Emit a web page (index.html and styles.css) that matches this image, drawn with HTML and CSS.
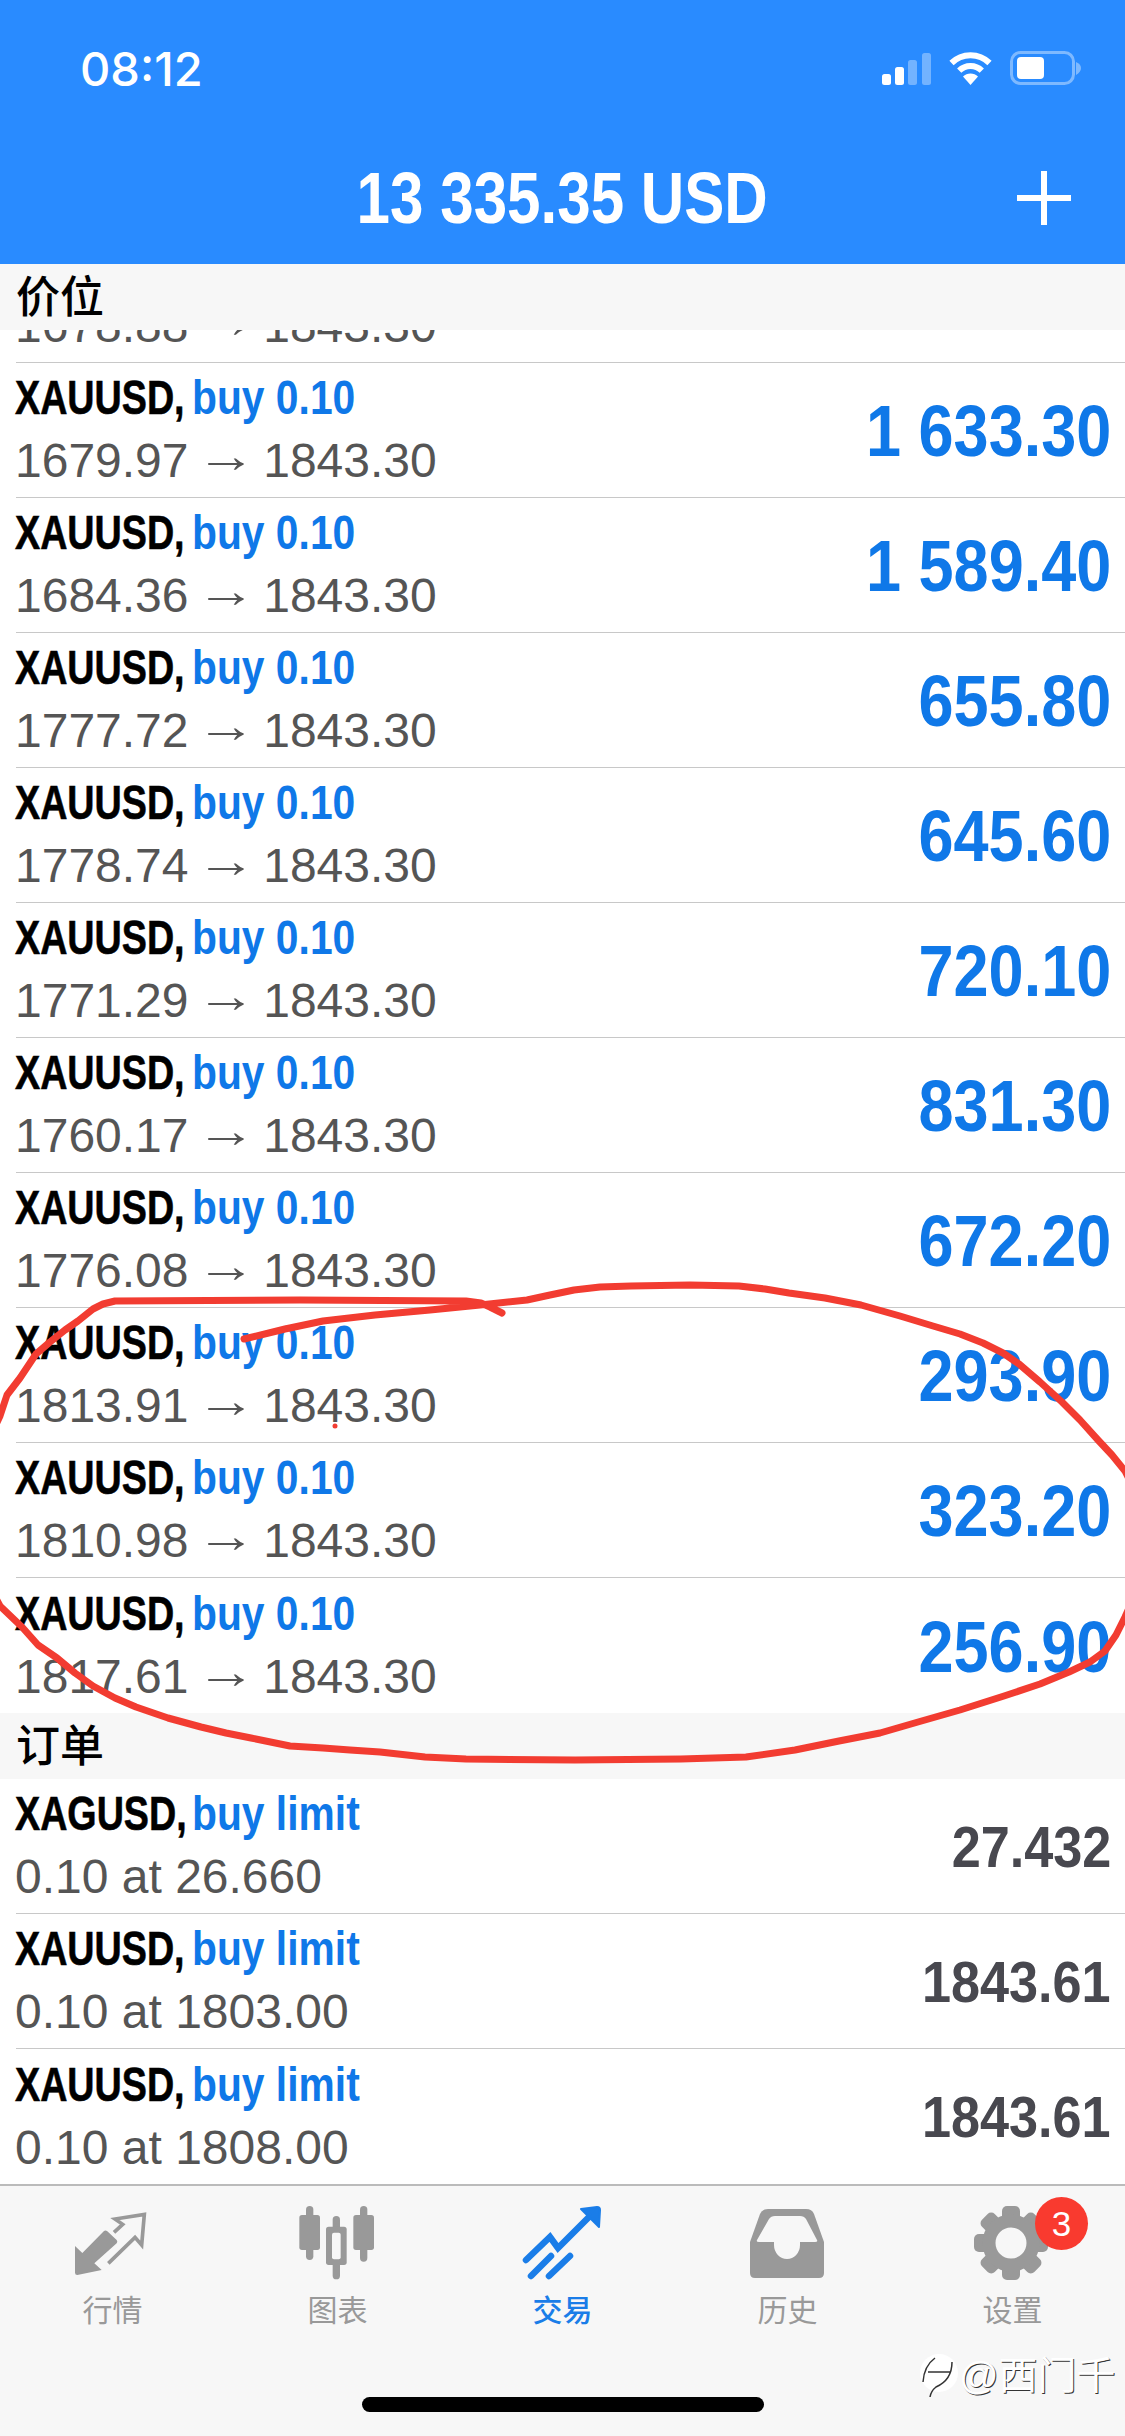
FILE: index.html
```html
<!DOCTYPE html>
<html lang="zh">
<head>
    <meta charset="UTF-8">
    <meta name="viewport" content="width=device-width, initial-scale=1.0">
    <title>交易</title>
    <link rel="stylesheet" href="styles.css">
</head>
<body>
    <div class="page">
        <!-- Cabecera azul -->
        <header class="header">
            <div class="status">
                <span class="time">08:12</span>
                <div class="status-icons">
                    <svg width="49" height="32" viewBox="0 0 49 32">
                        <rect x="0" y="21" width="9" height="11" rx="2.5" fill="#fff"/>
                        <rect x="13" y="14" width="9" height="18" rx="2.5" fill="#fff"/>
                        <rect x="26" y="7" width="9" height="25" rx="2.5" fill="#fff" opacity=".35"/>
                        <rect x="40" y="0" width="9" height="32" rx="2.5" fill="#fff" opacity=".35"/>
                    </svg>
                    <svg width="47" height="34" viewBox="0 0 47 34">
                        <path d="M4.5 12 A27 27 0 0 1 42.5 12" fill="none" stroke="#fff" stroke-width="6"/>
                        <path d="M12.2 19.7 A16 16 0 0 1 34.8 19.7" fill="none" stroke="#fff" stroke-width="6"/>
                        <path d="M23.5 34 L16 25.5 A10.6 10.6 0 0 1 31 25.5 Z" fill="#fff"/>
                    </svg>
                    <svg width="72" height="34" viewBox="0 0 72 34">
                        <rect x="1.5" y="1.5" width="62" height="31" rx="9" fill="none" stroke="#fff" stroke-opacity=".4" stroke-width="3"/>
                        <rect x="7" y="6" width="27" height="22" rx="4" fill="#fff"/>
                        <path d="M66 11 Q71 13 71 17 Q71 21 66 24 Z" fill="#fff" opacity=".4"/>
                    </svg>
                </div>
            </div>
            <div class="bar">
                <span></span>
                <h1 class="balance">13 335.35 USD</h1>
                <svg class="plus" width="54" height="54" viewBox="0 0 54 54">
                    <path d="M27 0 V54 M0 27 H54" stroke="#fff" stroke-width="6"/>
                </svg>
            </div>
        </header>

        <!-- Posiciones -->
        <div class="section-title">价位</div>
        <div class="positions">
            <div class="row">
                <div class="row-text">
                    <div class="line"></div>
                    <div class="sub">1678.88 <span class="arrow">→</span> 1843.30</div>
                </div>
            </div>
            <div class="row">
                <div class="row-text">
                    <div class="line"><span class="symbol">XAUUSD,</span><span class="side">buy 0.10</span></div>
                    <div class="sub">1679.97 <span class="arrow">→</span> 1843.30</div>
                </div>
                <div class="profit">1 633.30</div>
            </div>
            <div class="row">
                <div class="row-text">
                    <div class="line"><span class="symbol">XAUUSD,</span><span class="side">buy 0.10</span></div>
                    <div class="sub">1684.36 <span class="arrow">→</span> 1843.30</div>
                </div>
                <div class="profit">1 589.40</div>
            </div>
            <div class="row">
                <div class="row-text">
                    <div class="line"><span class="symbol">XAUUSD,</span><span class="side">buy 0.10</span></div>
                    <div class="sub">1777.72 <span class="arrow">→</span> 1843.30</div>
                </div>
                <div class="profit">655.80</div>
            </div>
            <div class="row">
                <div class="row-text">
                    <div class="line"><span class="symbol">XAUUSD,</span><span class="side">buy 0.10</span></div>
                    <div class="sub">1778.74 <span class="arrow">→</span> 1843.30</div>
                </div>
                <div class="profit">645.60</div>
            </div>
            <div class="row">
                <div class="row-text">
                    <div class="line"><span class="symbol">XAUUSD,</span><span class="side">buy 0.10</span></div>
                    <div class="sub">1771.29 <span class="arrow">→</span> 1843.30</div>
                </div>
                <div class="profit">720.10</div>
            </div>
            <div class="row">
                <div class="row-text">
                    <div class="line"><span class="symbol">XAUUSD,</span><span class="side">buy 0.10</span></div>
                    <div class="sub">1760.17 <span class="arrow">→</span> 1843.30</div>
                </div>
                <div class="profit">831.30</div>
            </div>
            <div class="row">
                <div class="row-text">
                    <div class="line"><span class="symbol">XAUUSD,</span><span class="side">buy 0.10</span></div>
                    <div class="sub">1776.08 <span class="arrow">→</span> 1843.30</div>
                </div>
                <div class="profit">672.20</div>
            </div>
            <div class="row">
                <div class="row-text">
                    <div class="line"><span class="symbol">XAUUSD,</span><span class="side">buy 0.10</span></div>
                    <div class="sub">1813.91 <span class="arrow">→</span> 1843.30</div>
                </div>
                <div class="profit">293.90</div>
            </div>
            <div class="row">
                <div class="row-text">
                    <div class="line"><span class="symbol">XAUUSD,</span><span class="side">buy 0.10</span></div>
                    <div class="sub">1810.98 <span class="arrow">→</span> 1843.30</div>
                </div>
                <div class="profit">323.20</div>
            </div>
            <div class="row last">
                <div class="row-text">
                    <div class="line"><span class="symbol">XAUUSD,</span><span class="side">buy 0.10</span></div>
                    <div class="sub">1817.61 <span class="arrow">→</span> 1843.30</div>
                </div>
                <div class="profit">256.90</div>
            </div>
        </div>

        <!-- Órdenes -->
        <div class="section-title">订单</div>
        <div class="orders">
            <div class="row">
                <div class="row-text">
                    <div class="line"><span class="symbol">XAGUSD,</span><span class="side">buy limit</span></div>
                    <div class="sub">0.10 at 26.660</div>
                </div>
                <div class="price">27.432</div>
            </div>
            <div class="row">
                <div class="row-text">
                    <div class="line"><span class="symbol">XAUUSD,</span><span class="side">buy limit</span></div>
                    <div class="sub">0.10 at 1803.00</div>
                </div>
                <div class="price">1843.61</div>
            </div>
            <div class="row last">
                <div class="row-text">
                    <div class="line"><span class="symbol">XAUUSD,</span><span class="side">buy limit</span></div>
                    <div class="sub">0.10 at 1808.00</div>
                </div>
                <div class="price">1843.61</div>
            </div>
        </div>

        <!-- Barra de pestañas -->
        <nav class="tabs">
            <div class="tab">
                <svg class="tab-icon" viewBox="210 60 255 255">
                    <path d="M225 198 L247 219 L312 153 Q317 150 322 154 L350 180 Q354 185 350 190 L283 250 L305 270 L232 285 Q225 285 225 278 Z" fill="#999"/>
                    <path d="M342 157 L368 133 L345 117 L433 103 L425 195 L405 172 L325 250" fill="none" stroke="#999" stroke-width="11"/>
                </svg>
                <span>行情</span>
            </div>
            <div class="tab">
                <svg class="tab-icon" viewBox="885 60 255 255">
                    <rect x="918" y="78" width="22" height="162" rx="11" fill="#999"/>
                    <rect x="898" y="105" width="62" height="105" rx="8" fill="#999"/>
                    <rect x="1080" y="78" width="22" height="167" rx="11" fill="#999"/>
                    <rect x="1060" y="105" width="62" height="105" rx="8" fill="#999"/>
                    <rect x="998" y="108" width="22" height="190" rx="11" fill="#999"/>
                    <rect x="978" y="140" width="62" height="115" rx="8" fill="#999"/>
                    <rect x="996" y="158" width="26" height="80" rx="6" fill="#f7f7f7"/>
                </svg>
                <span>图表</span>
            </div>
            <div class="tab active">
                <svg class="tab-icon" viewBox="0 0 85 85">
                    <path d="M6 60 L30 37 L38 48 L73 13" fill="none" stroke="#1a7de8" stroke-width="6.5" stroke-linecap="round"/>
                    <path d="M61 9 L77 7 Q80 7 80 10 L79 27 Z" fill="#1a7de8" stroke="#1a7de8" stroke-width="2" stroke-linejoin="round"/>
                    <path d="M11 76 L31 56 M29 76 L50 56" fill="none" stroke="#1a7de8" stroke-width="6.5" stroke-linecap="round"/>
                </svg>
                <span>交易</span>
            </div>
            <div class="tab">
                <svg class="tab-icon" viewBox="-5 -9 85 85">
                    <path d="M18 0 H56 Q62 0 64 5 L74 33 V64 Q74 69 69 69 H5 Q0 69 0 64 V33 L10 5 Q12 0 18 0 Z" fill="#999"/>
                    <path d="M25 7 H50 Q54 7 56 10 L67 31 Q68 33 65 33 H50 V36 A13 14 0 0 1 24 36 V33 H9 Q6 33 7 31 L19 10 Q21 7 25 7 Z" fill="#f7f7f7"/>
                </svg>
                <span>历史</span>
            </div>
            <div class="tab">
                <div class="tab-gear">
                    <svg class="tab-icon" viewBox="0 0 85 85">
                        <g fill="#999" transform="translate(41 43)">
                            <rect x="-9" y="-37" width="18" height="16" rx="5"/>
                            <rect x="-9" y="-37" width="18" height="16" rx="5" transform="rotate(45)"/>
                            <rect x="-9" y="-37" width="18" height="16" rx="5" transform="rotate(90)"/>
                            <rect x="-9" y="-37" width="18" height="16" rx="5" transform="rotate(135)"/>
                            <rect x="-9" y="-37" width="18" height="16" rx="5" transform="rotate(180)"/>
                            <rect x="-9" y="-37" width="18" height="16" rx="5" transform="rotate(225)"/>
                            <rect x="-9" y="-37" width="18" height="16" rx="5" transform="rotate(270)"/>
                            <rect x="-9" y="-37" width="18" height="16" rx="5" transform="rotate(315)"/>
                            <circle r="22" fill="none" stroke="#999" stroke-width="13"/>
                        </g>
                    </svg>
                    <span class="badge">3</span>
                </div>
                <span>设置</span>
            </div>
        </nav>

        <div class="home-bar"></div>

        <div class="watermark">
            <svg width="38" height="44" viewBox="0 0 38 44">
                <circle cx="19" cy="19" r="19" fill="#fff"/>
                <path d="M3 28 Q4 12 15 4 M8 18 H30 M32 8 Q32 26 16 33 Q11 37 10 43" fill="none" stroke="#333" stroke-width="1.5"/>
            </svg>
            <span>@西门千</span>
        </div>

        <!-- Marca roja a mano sobre la captura -->
        <svg class="scribble" width="1125" height="2436" viewBox="0 0 1125 2436">
            <polyline fill="none" stroke="#f23c31" stroke-width="7" stroke-linejoin="round" stroke-linecap="round" points="502,1313 490,1307 481,1303 466,1301 300,1300 115,1301 103,1304 93,1309 78,1321 65,1330 50,1342 36,1354 20,1378 7,1395 0,1416 -30,1480 -30,1550 0,1606 22,1627 38,1645 57,1658 75,1673 93,1686 115,1698 136,1707 168,1718 201,1727 226,1733 251,1738 290,1746 323,1748 350,1750 380,1752 425,1757 466,1759 575,1760 681,1759 746,1757 795,1750 839,1741 880,1733 918,1722 960,1710 1004,1696 1040,1684 1069,1672 1090,1662 1105,1651 1116,1635 1125,1617 1160,1540 1125,1471 1112,1455 1098,1440 1080,1420 1062,1402 1040,1382 1019,1364 1003,1353 983,1343 960,1334 933,1326 900,1316 861,1305 825,1298 789,1293 765,1289 739,1286 690,1285 631,1286 600,1287 574,1290 550,1295 527,1300 480,1305 430,1310 375,1315 323,1321 285,1329 244,1339"/>
            <circle cx="335" cy="1426" r="2.5" fill="#f23c31"/>
        </svg>
    </div>
</body>
</html>
```

FILE: styles.css
```css
body {
    margin: 0;
    background: #fff;
    font-family: "Liberation Sans", "Noto Sans CJK SC", sans-serif;
}
.page {
    position: relative;
    width: 1125px;
    height: 2436px;
    overflow: hidden;
}
.header {
    height: 264px;
    background: #298bff;
    color: #fff;
}
.status {
    height: 136px;
    display: flex;
    align-items: center;
    justify-content: space-between;
    padding: 0 43px 0 80px;
    box-sizing: border-box;
}
.time {
    font-family: Inter, sans-serif;
    font-size: 47px;
    font-weight: 500;
}
.status-icons {
    display: flex;
    align-items: flex-end;
    gap: 16px;
}
.bar {
    height: 124px;
    display: grid;
    grid-template-columns: 1fr auto 1fr;
    align-items: center;
}
.balance {
    margin: 0;
    font-size: 72px;
    font-weight: bold;
    white-space: nowrap;
    transform: scaleX(.835);
}
.plus {
    justify-self: end;
    margin-right: 54px;
}
.section-title {
    height: 66px;
    line-height: 68px;
    padding-left: 16px;
    background: #f7f7f7;
    color: #000;
    font-size: 44px;
    font-weight: 500;
}
.positions {
    height: 1383px;
    overflow: hidden;
    display: flex;
    flex-direction: column;
    justify-content: flex-end;
}
.row {
    flex: none;
    height: 135px;
    box-sizing: border-box;
    margin-left: 16px;
    padding-right: 14px;
    border-bottom: 1px solid #c8c8c8;
    display: flex;
    align-items: center;
    justify-content: space-between;
}
.row.last {
    border-bottom: none;
}
.row-text {
    margin: -2px 0 0 -1px;
}
.line {
    display: flex;
    height: 63px;
    line-height: 63px;
    font-size: 48px;
    font-weight: bold;
    white-space: nowrap;
}
.symbol {
    display: block;
    width: 177px;
    color: #000;
    -webkit-text-stroke: .6px #000;
    transform: scaleX(.785);
    transform-origin: left;
}
.side {
    display: block;
    color: #0f78e8;
    transform: scaleX(.85);
    transform-origin: left;
}
.sub {
    height: 63px;
    line-height: 63px;
    font-size: 48px;
    color: #555;
    white-space: nowrap;
}
.arrow {
    display: inline-block;
    line-height: 0;
    vertical-align: 5px;
    transform: scaleX(1.25);
}
.profit {
    margin-top: 2px;
    font-size: 72px;
    font-weight: bold;
    color: #0f78e8;
    white-space: nowrap;
    transform: scaleX(.875);
    transform-origin: right;
}
.price {
    font-size: 58px;
    font-weight: bold;
    color: #48484f;
    transform: scaleX(.9);
    transform-origin: right;
}
.tabs {
    height: 252px;
    box-sizing: border-box;
    border-top: 2px solid #bbb;
    padding-top: 14px;
    background: #f7f7f7;
    display: grid;
    grid-template-columns: repeat(5, 225px);
}
.tab {
    display: flex;
    flex-direction: column;
    align-items: center;
    gap: 9px;
    color: #999;
    font-size: 30px;
    line-height: 34px;
}
.tab.active {
    color: #1a7de8;
    font-weight: 500;
}
.tab-icon {
    display: block;
    width: 85px;
    height: 85px;
}
.tab-gear {
    position: relative;
}
.badge {
    position: absolute;
    left: 65px;
    top: -3px;
    width: 53px;
    height: 53px;
    line-height: 53px;
    border-radius: 50%;
    background: #f93a2f;
    color: #fff;
    font-size: 35px;
    text-align: center;
}
.home-bar {
    position: absolute;
    left: 362px;
    top: 2397px;
    width: 402px;
    height: 15px;
    border-radius: 8px;
    background: #000;
}
.watermark {
    position: absolute;
    left: 920px;
    top: 2354px;
    display: flex;
    align-items: center;
    gap: 1px;
    color: #fff;
    font-size: 39px;
    line-height: 44px;
    text-shadow: 1px 1px 0 #333;
    white-space: nowrap;
}
.scribble {
    position: absolute;
    left: 0;
    top: 0;
}
```
